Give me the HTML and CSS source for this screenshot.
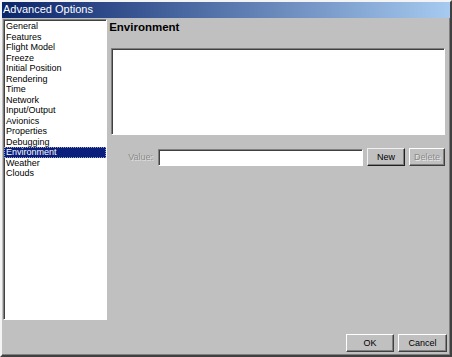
FILE: index.html
```html
<!DOCTYPE html>
<html lang="en">
<head>
  <meta charset="UTF-8" />
  <title>Advanced Options</title>
  <link rel="stylesheet" href="styles.css">
</head>
<body>

  <div class="window">
    <div class="titlebar">Advanced Options</div>

    <div class="main">
      <ul class="pages">
        <li>General</li>
        <li>Features</li>
        <li>Flight Model</li>
        <li>Freeze</li>
        <li>Initial Position</li>
        <li>Rendering</li>
        <li>Time</li>
        <li>Network</li>
        <li>Input/Output</li>
        <li>Avionics</li>
        <li>Properties</li>
        <li>Debugging</li>
        <li class="selected">Environment</li>
        <li>Weather</li>
        <li>Clouds</li>
      </ul>

      <div class="panel">
        <h1>Environment</h1>
        <div class="browser"></div>
        <div class="value-row">
          <label class="disabled">Value:</label>
          <div class="field"></div>
          <button type="button" class="btn btn-default">New</button>
          <button type="button" class="btn" disabled>Delete</button>
        </div>
      </div>
    </div>

    <div class="footer">
      <button type="button" class="btn btn-ok">OK</button>
      <button type="button" class="btn btn-cancel">Cancel</button>
    </div>
  </div>

</body>
</html>
```

FILE: styles.css
```css
/* Klassik Windows pəncərəsi */
body {
  margin: 0;
  font-family: "Liberation Sans", Arial, sans-serif;
  background: #c0c0c0;
}
.window {
  width: 452px;
  height: 357px;
  box-sizing: border-box;
  display: flex;
  flex-direction: column;
  background: #c0c0c0;
  border-style: solid;
  border-width: 2px;
  border-color: #f4f4f4 #404040 #404040 #f4f4f4;
  box-shadow: inset -1px -1px 0 #808080;
}
.titlebar {
  height: 16px;
  line-height: 15px;
  padding-left: 1px;
  color: #fff;
  font-family: "Liberation Sans", Arial, sans-serif;
  font-size: 11px;
  background: linear-gradient(to right, #0a246a, #a6caf0);
}
.main {
  flex: 1;
  display: flex;
  padding-top: 1px;
}
.pages {
  list-style: none;
  margin: 0 0 0 1px;
  padding: 1px 0 0 0;
  width: 105px;
  height: 301px;
  box-sizing: border-box;
  background: #fff;
  border-style: solid;
  border-width: 1px;
  border-color: #808080 #fff #fff #808080;
  box-shadow: inset 1px 1px 0 #404040;
  font-size: 9px;
}
.pages li {
  height: 10.5px;
  line-height: 10.5px;
  padding-left: 2px;
  color: #000;
}
.pages li.selected {
  background: #0a1f7c;
  color: #fff;
  outline: 1px dotted #9aa0c8;
  outline-offset: -1px;
}
.panel {
  flex: 1;
  padding: 0 5px 0 2px;
}
h1 {
  margin: 2px 0 0 0;
  font-size: 11.5px;
  line-height: 13px;
  font-weight: bold;
  color: #000;
}
.browser {
  margin: 14px 0 0 2px;
  height: 87px;
  background: #fff;
  border-style: solid;
  border-width: 1px;
  border-color: #808080 #fff #fff #808080;
  box-shadow: inset 1px 1px 0 #404040;
  box-sizing: border-box;
}
.value-row {
  display: flex;
  align-items: center;
  margin-top: 13px;
  padding-left: 19px;
  height: 18px;
}
label {
  font-size: 9px;
  margin-right: 5px;
}
.disabled {
  color: #8a8a8a;
  text-shadow: 1px 1px 0 #e0e0e0;
}
.field {
  width: 205px;
  height: 17px;
  box-sizing: border-box;
  background: #fff;
  border-style: solid;
  border-width: 1px;
  border-color: #808080 #fff #fff #808080;
  box-shadow: inset 1px 1px 0 #404040;
  margin-right: 4px;
}
.btn {
  height: 18px;
  padding: 0;
  box-sizing: border-box;
  font-family: "Liberation Sans", Arial, sans-serif;
  font-size: 9px;
  color: #000;
  background: #c0c0c0;
  border-style: solid;
  border-width: 1px;
  border-color: #fff #404040 #404040 #fff;
  box-shadow: inset -1px -1px 0 #808080;
}
.btn-default {
  width: 38px;
  margin-right: 4px;
  border-color: #f0f0f0 #202020 #202020 #f0f0f0;
}
.btn:disabled {
  width: 36px;
  color: #8a8a8a;
  text-shadow: 1px 1px 0 #eaeaea;
}
.footer {
  display: flex;
  justify-content: flex-end;
  gap: 4px;
  padding: 0 3px 3px 0;
}
.btn-ok {
  width: 48px;
}
.btn-cancel {
  width: 49px;
}
```
